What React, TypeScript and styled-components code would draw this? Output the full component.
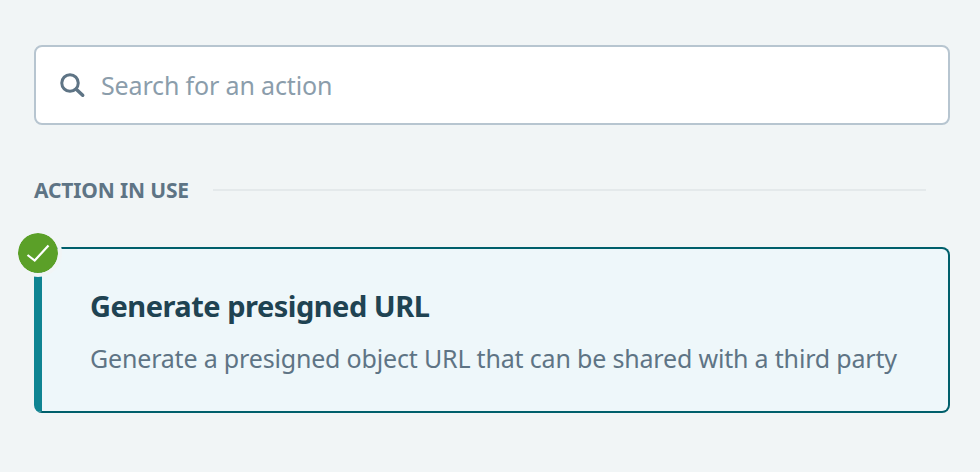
import React from "react";
import styled, { createGlobalStyle } from "styled-components";

const GlobalStyle = createGlobalStyle`
  * {
    box-sizing: border-box;
    margin: 0;
    padding: 0;
  }
  body {
    background-color: #f1f5f6;
    font-family: "Noto Sans", "Open Sans", sans-serif;
  }
`;

const Page = styled.div`
  width: 980px;
  height: 472px;
  padding: 45px 30px 0 34px;
  display: flex;
  flex-direction: column;
`;

const SearchBox = styled.div`
  height: 80px;
  display: flex;
  align-items: center;
  gap: 15px;
  padding-left: 24px;
  background-color: #fff;
  border: 2px solid #b7c5d0;
  border-radius: 8px;
`;

const SearchIcon = styled.svg`
  width: 26px;
  height: 26px;
  flex-shrink: 0;
  color: #5e7485;
`;

const SearchText = styled.span`
  font-size: 25px;
  letter-spacing: -0.15px;
  color: #8b9dab;
`;

const SectionHeader = styled.div`
  display: flex;
  align-items: center;
  gap: 24px;
  margin-top: 51px;
  padding-right: 24px;
  height: 28px;
`;

const SectionLabel = styled.span`
  font-size: 21px;
  font-weight: 700;
  letter-spacing: -0.15px;
  color: #5e7485;
  white-space: nowrap;
`;

const Rule = styled.div`
  flex: 1;
  height: 2px;
  background-color: #e4e9eb;
`;

const Card = styled.div`
  position: relative;
  margin-top: 43px;
  height: 166px;
  padding: 40px 0 0 48px;
  background-color: #eef7fa;
  border: 2px solid #005f6b;
  border-left: 8px solid #0f8492;
  border-radius: 8px;
`;

const Badge = styled.div`
  position: absolute;
  top: -20px;
  left: -28px;
  width: 48px;
  height: 48px;
  display: flex;
  align-items: center;
  justify-content: center;
  background-color: #5ba028;
  background-clip: padding-box;
  border: 4px solid #f1f5f6;
  border-radius: 50%;
`;

const CheckIcon = styled.svg`
  width: 24px;
  height: 24px;
`;

const CardTitle = styled.div`
  font-size: 29px;
  line-height: 34px;
  font-weight: 700;
  letter-spacing: -0.5px;
  color: #1f4352;
`;

const CardDescription = styled.div`
  margin-top: 20px;
  font-size: 25px;
  line-height: 30px;
  letter-spacing: -0.18px;
  color: #5e7485;
  white-space: nowrap;
`;

export default function App() {
  return (
    <>
      <GlobalStyle />
      <Page>
        <SearchBox>
          <SearchIcon viewBox="0 0 26 26" fill="none">
            <circle cx="10" cy="11" r="8.25" stroke="currentColor" strokeWidth="3" />
            <path d="M16.5 17.5L22.7 23.2" stroke="currentColor" strokeWidth="3.5" strokeLinecap="round" />
          </SearchIcon>
          <SearchText>Search for an action</SearchText>
        </SearchBox>
        <SectionHeader>
          <SectionLabel>ACTION IN USE</SectionLabel>
          <Rule />
        </SectionHeader>
        <Card>
          <Badge>
            <CheckIcon viewBox="0 0 24 24" fill="none">
              <path d="M1.5 14L8.7 19.5L22.5 4.5" stroke="#fff" strokeWidth="2.2" />
            </CheckIcon>
          </Badge>
          <CardTitle>Generate presigned URL</CardTitle>
          <CardDescription>Generate a presigned object URL that can be shared with a third party</CardDescription>
        </Card>
      </Page>
    </>
  );
}
